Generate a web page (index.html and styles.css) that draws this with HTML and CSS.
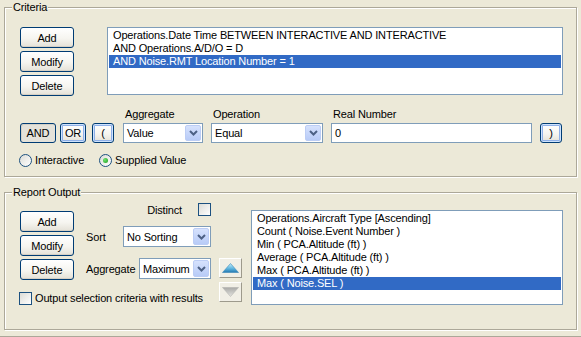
FILE: index.html
```html
<!DOCTYPE html>
<html lang="en">
<head>
    <meta charset="UTF-8">
    <meta name="viewport" content="width=device-width, initial-scale=1.0">
    <title>Query Criteria</title>
    <link rel="stylesheet" href="styles.css">
</head>
<body>
    <div id="query-window">
        <fieldset class="group criteria">
            <legend>Criteria</legend>
            <div class="group-body criteria-body">
                <div class="top-row">
                    <div class="btn-stack">
                        <button class="xp-btn">Add</button>
                        <button class="xp-btn">Modify</button>
                        <button class="xp-btn">Delete</button>
                    </div>
                    <ul class="listbox criteria-list">
                        <li>Operations.Date Time BETWEEN INTERACTIVE AND INTERACTIVE</li>
                        <li>AND Operations.A/D/O = D</li>
                        <li class="selected">AND Noise.RMT Location Number = 1</li>
                    </ul>
                </div>

                <div class="expr-row">
                    <button class="xp-btn small pressed" id="and-button">AND</button>
                    <button class="xp-btn small focus" id="or-button">OR</button>
                    <button class="xp-btn small focus" id="open-button">(</button>

                    <div class="field" id="aggregate-field">
                        <span class="field-label">Aggregate</span>
                        <div class="combo">
                            <span class="combo-text">Value</span>
                            <span class="drop"><svg width="9" height="6" viewBox="0 0 9 6"><path d="M1 1 L4.5 4.5 L8 1" fill="none" stroke="#4d6185" stroke-width="2"/></svg></span>
                        </div>
                    </div>

                    <div class="field" id="operation-field">
                        <span class="field-label">Operation</span>
                        <div class="combo">
                            <span class="combo-text">Equal</span>
                            <span class="drop"><svg width="9" height="6" viewBox="0 0 9 6"><path d="M1 1 L4.5 4.5 L8 1" fill="none" stroke="#4d6185" stroke-width="2"/></svg></span>
                        </div>
                    </div>

                    <div class="field" id="value-field">
                        <span class="field-label">Real Number</span>
                        <div class="textbox">0</div>
                    </div>

                    <button class="xp-btn small focus" id="close-button">)</button>
                </div>

                <div class="radio-row">
                    <label class="option"><span class="radio"></span>Interactive</label>
                    <label class="option"><span class="radio checked"></span>Supplied Value</label>
                </div>
            </div>
        </fieldset>

        <fieldset class="group report">
            <legend>Report Output</legend>
            <div class="group-body report-body">
                <div class="report-left">
                    <div class="report-top">
                        <div class="btn-stack">
                            <button class="xp-btn">Add</button>
                            <button class="xp-btn">Modify</button>
                            <button class="xp-btn">Delete</button>
                        </div>
                        <div class="sort-controls">
                            <div class="control-row distinct-row">
                                <span>Distinct</span>
                                <span class="check"></span>
                            </div>
                            <div class="control-row sort-row">
                                <span>Sort</span>
                                <div class="combo" id="sort-combo">
                                    <span class="combo-text">No Sorting</span>
                                    <span class="drop"><svg width="9" height="6" viewBox="0 0 9 6"><path d="M1 1 L4.5 4.5 L8 1" fill="none" stroke="#4d6185" stroke-width="2"/></svg></span>
                                </div>
                            </div>
                            <div class="control-row agg-row">
                                <span>Aggregate</span>
                                <div class="combo" id="report-agg-combo">
                                    <span class="combo-text">Maximum</span>
                                    <span class="drop"><svg width="9" height="6" viewBox="0 0 9 6"><path d="M1 1 L4.5 4.5 L8 1" fill="none" stroke="#4d6185" stroke-width="2"/></svg></span>
                                </div>
                            </div>
                        </div>
                    </div>
                    <label class="check-row">
                        <span class="check"></span>Output selection criteria with results
                    </label>
                </div>

                <div class="move-btns">
                    <button class="move-btn">
                        <svg width="17" height="10" viewBox="0 0 17 10">
                            <defs>
                                <linearGradient id="up-fill" x1="0" y1="0" x2="0" y2="1">
                                    <stop offset="0" stop-color="#c6eefc"/>
                                    <stop offset="0.55" stop-color="#5fb6e0"/>
                                    <stop offset="1" stop-color="#2378b0"/>
                                </linearGradient>
                            </defs>
                            <path d="M8.5 0.5 L16.5 9.5 L0.5 9.5 Z" fill="url(#up-fill)" stroke="#3a88b8" stroke-width="0.6"/>
                        </svg>
                    </button>
                    <button class="move-btn">
                        <svg width="17" height="10" viewBox="0 0 17 10">
                            <defs>
                                <linearGradient id="down-fill" x1="0" y1="0" x2="0" y2="1">
                                    <stop offset="0" stop-color="#a9a9a6"/>
                                    <stop offset="1" stop-color="#e4e4e0"/>
                                </linearGradient>
                            </defs>
                            <path d="M0.5 0.5 L16.5 0.5 L8.5 9.5 Z" fill="url(#down-fill)" stroke="#b4b4b0" stroke-width="0.6"/>
                        </svg>
                    </button>
                </div>

                <ul class="listbox report-list">
                    <li>Operations.Aircraft Type [Ascending]</li>
                    <li>Count ( Noise.Event Number )</li>
                    <li>Min ( PCA.Altitude (ft) )</li>
                    <li>Average ( PCA.Altitude (ft) )</li>
                    <li>Max ( PCA.Altitude (ft) )</li>
                    <li class="selected">Max ( Noise.SEL )</li>
                </ul>
            </div>
        </fieldset>
    </div>
</body>
</html>
```

FILE: styles.css
```css
* {
    box-sizing: border-box;
}

body {
    margin: 0;
    font-family: "Liberation Sans", Arial, sans-serif;
    font-size: 11px;
    letter-spacing: -0.15px;
    color: #000;
    background-color: #ECE9D8;
}

#query-window {
    height: 337px;
    padding: 0 4px;
    border-bottom: 1px solid #aca899;
}

/* group boxes */
.group {
    margin: 0;
    padding: 0;
    min-width: 0;
    border: 1px solid #aca899;
    box-shadow: inset 1px 1px #fff, 1px 1px #fff;
}

.group legend {
    margin-left: 7px;
    padding: 0 1px;
    line-height: 15px;
    background-color: #ECE9D8;
}

.report {
    margin-top: 8px;
}

.criteria-body {
    padding: 12px 13px 9px 15px;
}

.report-body {
    display: flex;
    align-items: flex-start;
    padding: 0 13px 24px 15px;
}

/* buttons */
.xp-btn {
    font: inherit;
    letter-spacing: inherit;
    color: #000;
    height: 21px;
    padding: 0;
    border: 1px solid #003c74;
    border-radius: 3px;
    background: linear-gradient(#fff, #f6f5f0 55%, #e4e1d7);
    box-shadow: inset 0 -1px #d6d0c5;
}

.xp-btn.small {
    height: 20px;
}

.xp-btn.pressed {
    background: #e4e2da;
    box-shadow: inset 1px 1px #d3d0c6;
}

.xp-btn.focus {
    box-shadow: inset 0 0 0 1px #cee3fd, inset 0 0 0 2px #8fb0e8;
}

.btn-stack {
    display: flex;
    flex-direction: column;
    gap: 3px;
    width: 54px;
    flex: none;
}

/* list boxes */
.listbox {
    margin: 0;
    padding: 1px;
    list-style: none;
    flex: 1;
    border: 1px solid #7f9db9;
    background-color: #fff;
    overflow: hidden;
}

.listbox li {
    height: 13px;
    line-height: 13px;
    padding-left: 4px;
    white-space: nowrap;
}

.listbox li.selected {
    background-color: #316ac5;
    color: #fff;
}

/* criteria */
.top-row {
    display: flex;
    align-items: flex-start;
}

.criteria-list {
    margin-left: 33px;
    height: 68px;
}

.expr-row {
    display: flex;
    align-items: flex-end;
    margin-top: 12px;
}

#and-button {
    width: 36px;
}

#or-button {
    width: 26px;
    margin-left: 4px;
}

#open-button {
    width: 22px;
    margin-left: 6px;
}

#close-button {
    width: 22px;
    margin-left: 8px;
}

.field {
    display: flex;
    flex-direction: column;
}

.field-label {
    line-height: 13px;
    margin-bottom: 2px;
    padding-left: 2px;
}

#aggregate-field {
    width: 80px;
    margin-left: 9px;
}

#operation-field {
    width: 112px;
    margin-left: 8px;
}

#value-field {
    width: 201px;
    margin-left: 8px;
}

.combo {
    display: flex;
    align-items: center;
    height: 20px;
    padding: 1px;
    border: 1px solid #7f9db9;
    background-color: #fff;
}

.combo-text {
    flex: 1;
    padding-left: 2px;
    white-space: nowrap;
}

.drop {
    display: flex;
    align-items: center;
    justify-content: center;
    width: 16px;
    height: 100%;
    border: 1px solid #bccdf5;
    border-radius: 2px;
    background: linear-gradient(#d6e2fd, #b8cbf7);
}

.textbox {
    height: 20px;
    line-height: 18px;
    padding-left: 3px;
    border: 1px solid #7f9db9;
    background-color: #fff;
}

.radio-row {
    display: flex;
    align-items: center;
    gap: 15px;
    margin-top: 11px;
    margin-left: -1px;
}

.option {
    display: flex;
    align-items: center;
    gap: 3px;
    line-height: 13px;
}

.radio {
    display: flex;
    align-items: center;
    justify-content: center;
    width: 13px;
    height: 13px;
    border: 1px solid #1c5180;
    border-radius: 50%;
    background: linear-gradient(135deg, #dcdcd6, #fff);
}

.radio.checked::after {
    content: "";
    width: 5px;
    height: 5px;
    border-radius: 50%;
    background: radial-gradient(circle at 35% 35%, #6ee46e, #1f9a1f);
}

.check {
    display: inline-block;
    width: 13px;
    height: 13px;
    border: 1px solid #1c5180;
    background: linear-gradient(135deg, #dcdcd6, #fff);
}

/* report output */
.report-left {
    width: 191px;
    flex: none;
}

.report-top {
    display: flex;
    align-items: flex-start;
}

.report-top .btn-stack {
    margin-top: 11px;
}

.sort-controls {
    width: 125px;
    margin: 3px 0 0 12px;
}

.control-row {
    display: flex;
    align-items: center;
    justify-content: space-between;
}

.distinct-row {
    justify-content: flex-end;
    gap: 16px;
    height: 13px;
}

.sort-row {
    margin-top: 10px;
}

.agg-row {
    margin-top: 11px;
}

.control-row .combo {
    height: 21px;
}

#sort-combo {
    width: 88px;
}

#report-agg-combo {
    width: 72px;
}

.check-row {
    display: flex;
    align-items: center;
    gap: 3px;
    margin: 12px 0 0 -1px;
    line-height: 13px;
}

.move-btns {
    display: flex;
    flex-direction: column;
    gap: 4px;
    margin: 58px 0 0 8px;
}

.move-btn {
    display: flex;
    align-items: center;
    justify-content: center;
    width: 23px;
    height: 20px;
    padding: 0;
    border: 1px solid;
    border-color: #fff #9d9a8c #9d9a8c #fff;
    background-color: #f1efe6;
}

.report-list {
    margin: 10px 0 0 9px;
    height: 95px;
}
```
